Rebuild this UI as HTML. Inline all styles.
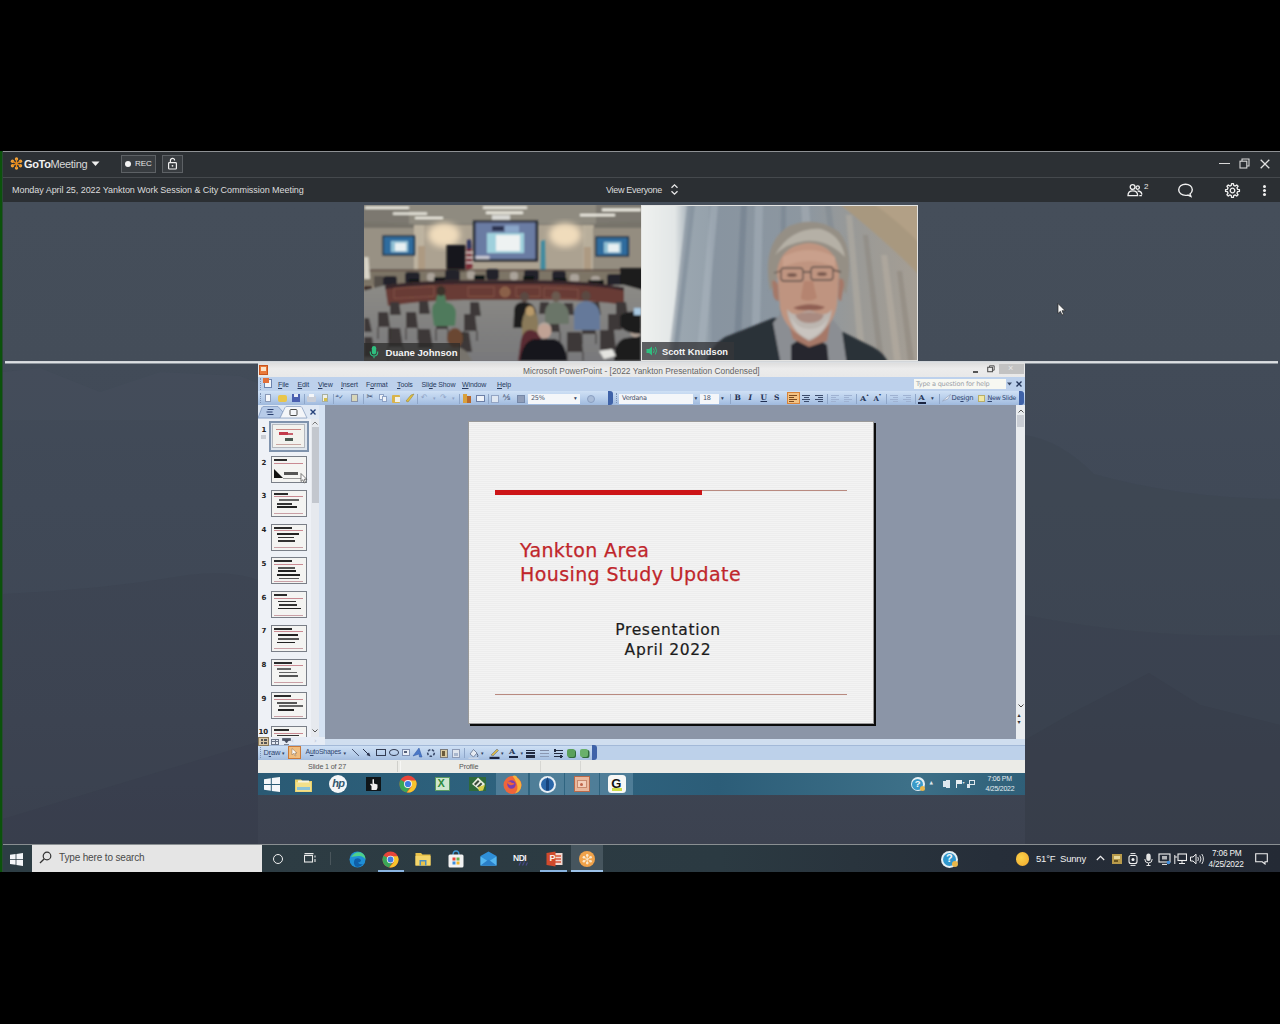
<!DOCTYPE html>
<html lang="en">
<head>
<meta charset="utf-8">
<title>GoToMeeting - Yankton Work Session</title>
<style>
html,body{margin:0;padding:0;background:#000;}
body{width:1280px;height:1024px;position:relative;overflow:hidden;font-family:"Liberation Sans",sans-serif;}
.abs{position:absolute;}
#stage{position:absolute;left:0;top:0;width:1280px;height:1024px;overflow:hidden;background:#000;}
#green{left:0;top:151px;width:3px;height:721px;background:linear-gradient(90deg,#0b520b 0,#0b520b 2px,#2a4a34 2px,#2a4a34 3px);}
#gtm-title{left:3px;top:151px;width:1277px;height:26px;background:#2c3034;border-top:1px solid #8e9194;box-sizing:border-box;}
#gtm-sub{left:3px;top:177px;width:1277px;height:25px;background:#2b2f33;border-top:1px solid #45494d;box-sizing:border-box;}
#main{left:3px;top:202px;width:1277px;height:642px;background:linear-gradient(#454e5a 0,#444d59 159px,#424b58 162px,#404957 300px,#3e4654 520px,#3c4250 642px);overflow:hidden;}
#sep{left:5px;top:361px;width:1273px;height:3px;background:linear-gradient(#c9cdd1 0,#dcdfe2 1px,#dcdfe2 2px,#8e959d 2px,#8e959d 3px);}
.t{position:absolute;white-space:nowrap;line-height:1;}

#gtm-h .w{color:#f2f2f2;}
.btn{position:absolute;box-sizing:border-box;border:1px solid #5d6165;background:#383c40;}

#ppt{left:258px;top:363px;width:767px;height:432px;background:#8b95a7;overflow:hidden;font-family:"DejaVu Sans","Liberation Sans",sans-serif;}
#ppt .t{color:#27395c;}
#p-title{left:0;top:0;width:767px;height:14px;background:linear-gradient(#dedede,#ececec 40%,#e8e8e8);}
#p-menu{left:0;top:14px;width:767px;height:14px;background:#bdd1ec;}
#p-tool{left:0;top:28px;width:767px;height:14px;background:linear-gradient(#cfe0f5,#b4cbe9 60%,#9fb9dd);}
#p-left{left:0;top:42px;width:67px;height:340px;background:#e9eef5;}
#p-edit{left:67px;top:42px;width:691px;height:334px;background:#8b95a7;}
#p-vscroll{left:758px;top:42px;width:9px;height:334px;background:#e9ecef;}
#p-bot{left:67px;top:376px;width:700px;height:6px;background:#d0deef;}
#p-draw{left:0;top:382px;width:767px;height:15px;background:linear-gradient(90deg,transparent 0,transparent 336px,#bdd1ea 336px),linear-gradient(#cddff4,#b6cdea 60%,#a5bee0);border-top:1px solid #a3b9d8;box-sizing:border-box;}
#p-status{left:0;top:397px;width:767px;height:13px;background:#ebebe7;}
#p-task{left:0;top:410px;width:767px;height:22px;background:linear-gradient(90deg,#2a5a74,#2f6480 40%,#2c5d78 60%,#3d7088 85%,#2f5f78);}
.mi{position:absolute;top:17.500px;font-size:7px;line-height:1;white-space:nowrap;color:#27395c;letter-spacing:-0.12px;font-family:"Liberation Sans",sans-serif}
.ic{position:absolute;border-radius:1px;}
/*SECTION-CSS*/
</style>
</head>
<body>
<div id="stage">
<div id="green" class="abs"></div>
<div id="gtm-title" class="abs"></div>
<div id="gtm-sub" class="abs"></div>
<div id="main" class="abs"><svg class="abs" style="left:0;top:159px" width="1277" height="483" viewBox="3 361 1277 483">
<path d="M3 372L40 368L100 392L160 372L240 376L290 396L258 420L3 420z" fill="#48515e" opacity="0.350"/>
<path d="M3 594Q100 590 188 575Q230 570 258 580V844H3z" fill="#363d4a" opacity="0.220"/>
<path d="M3 819L258 742V844H3z" fill="#333946" opacity="0.250"/>
<path d="M1025 435Q1060 440 1094 474Q1180 498 1280 499V844H1025z" fill="#373e4b" opacity="0.220"/>
<path d="M1025 615Q1150 640 1280 635V844H1025z" fill="#353c49" opacity="0.220"/>
<path d="M1025 740L1074 712L1149 673L1200 705L1280 725V844H1025z" fill="#323845" opacity="0.250"/>
</svg></div>
<div id="sep" class="abs"></div>
<div id="gtm-h">
<svg class="abs" style="left:9px;top:156px" width="15" height="15" viewBox="-7.5 -7.5 15 15">
<g fill="#f2a33a"><circle cx="0" cy="-4.6" r="1.7"/><circle cx="0" cy="4.6" r="1.7"/><circle cx="4" cy="-2.3" r="1.7"/><circle cx="4" cy="2.3" r="1.7"/><circle cx="-4" cy="-2.3" r="1.7"/><circle cx="-4" cy="2.3" r="1.7"/></g>
<g stroke="#e88a1a" stroke-width="1.3"><path d="M0 -4.6V4.6M4 -2.3L-4 2.3M-4 -2.3L4 2.3"/></g>
</svg>
<div class="t w" id="gtmlogo" style="left:24px;top:159px;font-size:11px;letter-spacing:-0.35px"><b>GoTo</b><span style="color:#d8d8d8">Meeting</span></div>
<svg class="abs" style="left:91px;top:161px" width="9" height="6"><path d="M0.5 0.5h8l-4 4.5z" fill="#f0f0f0"/></svg>
<div class="btn" style="left:121px;top:155px;width:35px;height:18px"></div>
<div class="abs" style="left:125px;top:161px;width:6px;height:6px;border-radius:50%;background:#f4f4f4"></div>
<div class="t w" style="left:135px;top:160px;font-size:8px;color:#e6e6e6">REC</div>
<div class="btn" style="left:162px;top:155px;width:21px;height:18px"></div>
<svg class="abs" style="left:167px;top:157px" width="11" height="13" viewBox="0 0 11 13"><rect x="1.6" y="5.6" width="7.8" height="6.4" rx="0.8" fill="none" stroke="#f0f0f0" stroke-width="1.2"/><path d="M3.4 5.6V3.4a2.1 2.1 0 0 1 4.2 0" fill="none" stroke="#f0f0f0" stroke-width="1.2"/><circle cx="5.5" cy="8.8" r="0.9" fill="#f0f0f0"/></svg>
<div class="t" id="mtitle" style="left:12px;top:186px;font-size:9px;letter-spacing:-0.05px;color:#dcdcdc">Monday April 25, 2022 Yankton Work Session &amp; City Commission Meeting</div>
<div class="t" id="viewev" style="left:606px;top:186px;letter-spacing:-0.3px;font-size:9px;color:#dcdcdc">View Everyone</div>
<svg class="abs" style="left:670px;top:183px" width="9" height="13" viewBox="0 0 9 13"><path d="M1.5 4.8L4.5 1.8L7.5 4.8M1.5 8.2L4.5 11.2L7.5 8.2" fill="none" stroke="#e8e8e8" stroke-width="1.3"/></svg>
<!-- window controls -->
<div class="abs" style="left:1219px;top:163px;width:11px;height:1px;background:#d8d8d8"></div>
<svg class="abs" style="left:1239px;top:158px" width="11" height="11" viewBox="0 0 11 11"><path d="M3 3V1h7v7H8" fill="none" stroke="#d8d8d8" stroke-width="1.1"/><rect x="1" y="3.2" width="6.8" height="6.8" fill="none" stroke="#d8d8d8" stroke-width="1.1"/></svg>
<svg class="abs" style="left:1260px;top:159px" width="10" height="10" viewBox="0 0 10 10"><path d="M0.7 0.7L9.3 9.3M9.3 0.7L0.7 9.3" stroke="#e0e0e0" stroke-width="1.3"/></svg>
<!-- people -->
<svg class="abs" style="left:1127px;top:183px" width="24" height="15" viewBox="0 0 24 15"><g fill="none" stroke="#f0f0f0" stroke-width="1.3"><circle cx="5.6" cy="4" r="2.4"/><circle cx="10.7" cy="4.6" r="1.7"/><path d="M1 12.6c0-3 2-4.8 4.8-4.8s4.8 1.8 4.8 4.800z"/><path d="M10.600 8c2.300 0 4 1.300 4.300 3.600M12.300 12.600h2.600"/></g></svg>
<div class="t" style="left:1144px;top:183px;font-size:8px;color:#e8e8e8">2</div>
<!-- chat -->
<svg class="abs" style="left:1177px;top:183px" width="17" height="15" viewBox="0 0 17 15"><path d="M8.500 1.200c3.800 0 6.800 2.400 6.800 5.600c0 1.700-0.900 3.200-2.300 4.200l0.900 2.400l-3-1.300c-0.800 0.200-1.600 0.300-2.400 0.300c-3.800 0-6.800-2.400-6.800-5.600s3-5.600 6.800-5.600z" fill="none" stroke="#f0f0f0" stroke-width="1.4"/></svg>
<!-- gear -->
<svg class="abs" style="left:1224px;top:182px" width="17" height="17" viewBox="-8.5 -8.5 17 17"><path d="M-1.21 -5.06L-0.93 -6.94L0.93 -6.94L1.21 -5.06L2.72 -4.43L4.25 -5.56L5.56 -4.25L4.43 -2.72L5.06 -1.21L6.94 -0.93L6.94 0.93L5.06 1.21L4.43 2.72L5.56 4.25L4.25 5.56L2.72 4.43L1.21 5.06L0.93 6.94L-0.93 6.94L-1.21 5.06L-2.72 4.43L-4.25 5.56L-5.56 4.25L-4.43 2.72L-5.06 1.21L-6.94 0.93L-6.94 -0.93L-5.06 -1.21L-4.43 -2.72L-5.56 -4.25L-4.25 -5.56L-2.72 -4.43z" fill="none" stroke="#f0f0f0" stroke-width="1.3" stroke-linejoin="round"/><circle r="2.3" fill="none" stroke="#f0f0f0" stroke-width="1.3"/></svg>
<!-- kebab -->
<div class="abs" style="left:1263px;top:185px;width:3px;height:3px;border-radius:50%;background:#f0f0f0;box-shadow:0 4px 0 #f0f0f0,0 8px 0 #f0f0f0"></div>
</div>
<svg class="abs" id="vid1" style="left:364px;top:205px" width="277" height="156" viewBox="0 -1 277 156">
<defs><filter id="b1" x="-5%" y="-5%" width="110%" height="110%"><feGaussianBlur stdDeviation="0.9"/></filter>
<filter id="b2" x="-20%" y="-20%" width="140%" height="140%"><feGaussianBlur stdDeviation="3"/></filter>
<linearGradient id="floor" x1="0" y1="0" x2="0" y2="1"><stop offset="0" stop-color="#8c8b86"/><stop offset="1" stop-color="#77777a"/></linearGradient>
<clipPath id="c1"><rect y="-1" width="277" height="156"/></clipPath></defs>
<g clip-path="url(#c1)">
<rect y="-1" width="277" height="156" fill="#9a8e7c"/>
<g filter="url(#b1)">
<!-- ceiling -->
<rect x="-5" y="-5" width="290" height="23" fill="#8f8b80"/><rect x="-5" y="-5" width="50" height="30" fill="#7b786f"/><rect x="232" y="-5" width="50" height="30" fill="#7b786f"/>
<path d="M-5 16L50 18L225 18L285 15V24L225 22H50L-5 24z" fill="#77736a"/>
<!-- lights -->
<g fill="#f4f2e8"><rect x="1" y="0.500" width="44" height="2.400"/><rect x="29" y="6.500" width="34" height="2.200"/><rect x="51" y="11" width="28" height="2"/><rect x="119" y="0.500" width="44" height="2.200"/><rect x="122" y="5.500" width="37" height="2.400"/><rect x="216" y="8" width="35" height="2.200"/><rect x="238" y="2.500" width="39" height="2.600"/></g>
<rect x="128" y="9" width="18" height="6.500" fill="#d8d8d4"/>
<!-- walls -->
<rect x="-5" y="22" width="58" height="48" fill="#989184"/>
<rect x="50" y="19" width="180" height="50" fill="#aca291"/>
<rect x="225" y="22" width="60" height="48" fill="#948d80"/>
<rect x="50" y="19" width="10" height="50" fill="#bdb3a0"/><rect x="219" y="19" width="10" height="50" fill="#b8ae9b"/>
<rect x="54" y="40" width="7" height="27" fill="#ad9a82"/><rect x="220" y="41" width="7" height="26" fill="#ad9a82"/>
</g>
<ellipse cx="80" cy="29" rx="16" ry="12" fill="#f0dcbc" filter="url(#b2)"/>
<ellipse cx="201" cy="29" rx="16" ry="12" fill="#f0dcbc" filter="url(#b2)"/>
<g filter="url(#b1)">
<!-- projector screen -->
<rect x="109" y="14.500" width="65" height="41" fill="#23252e"/>
<rect x="111.500" y="16.500" width="60" height="36.500" fill="#6a7ba3"/>
<rect x="123" y="27" width="37" height="20" fill="#9fd0dc"/><rect x="132" y="29" width="24" height="16" fill="#eef2f2"/>
<rect x="128" y="20" width="12" height="5" fill="#2b3350"/><rect x="141" y="19.500" width="14" height="7" fill="#8aa6c8"/>
<rect x="111.500" y="50" width="14" height="3" fill="#c9c9d4"/>
<!-- tvs -->
<rect x="18.500" y="29.500" width="32.500" height="20" fill="#1e2a3e"/><rect x="20" y="31" width="29.500" height="17" fill="#2f6c9e"/><rect x="27" y="35" width="17" height="11" fill="#8fc0d4"/><rect x="31" y="37" width="11" height="8" fill="#e8f0f2"/>
<rect x="231.500" y="30.500" width="33.500" height="20" fill="#1e2a3e"/><rect x="233" y="32" width="30.500" height="17" fill="#2f6c9e"/><rect x="240" y="36" width="17" height="11" fill="#8fc0d4"/><rect x="244" y="38" width="11" height="8" fill="#e8f0f2"/>
<!-- door -->
<rect x="82.500" y="39" width="19" height="34" fill="#17171b"/>
<!-- flags -->
<path d="M103 34L107 33.500L108.500 62L102 64z" fill="#7a2a36"/><path d="M103 34l4-0.500l0.500 9l-4.500 1z" fill="#2a3560"/><rect x="102.500" y="46" width="6" height="1.300" fill="#e4d8d8"/><rect x="102.500" y="51" width="6" height="1.300" fill="#e4d8d8"/><rect x="102.500" y="56" width="6" height="1.300" fill="#e4d8d8"/>
<path d="M177 35L181 34L181.500 64L176.500 65z" fill="#3f8aa0"/>
<!-- rail behind dais -->
<rect x="-5" y="63.500" width="290" height="2" fill="#5a4a40"/>
<rect x="-5" y="65.500" width="290" height="14" fill="#7d7466"/>
<!-- left easel / white -->
<path d="M0 51h4.500l1.500 22H0z" fill="#d8d4c8"/>
<rect x="0" y="80" width="8" height="32" fill="#3a2a28"/>
<!-- council people row -->
<g fill="#24242a"><rect x="19" y="70" width="14" height="11" rx="3"/><rect x="41" y="66" width="15" height="12" rx="3"/><rect x="81" y="64" width="15" height="12" rx="3"/><rect x="122" y="63" width="13" height="11" rx="3"/><rect x="160" y="64" width="15" height="11" rx="3"/><rect x="188" y="65" width="14" height="12" rx="3"/><rect x="243" y="68" width="16" height="13" rx="3"/></g>
<g fill="#aaa39a"><rect x="63" y="67" width="8" height="8" rx="3"/><rect x="103" y="65" width="8" height="8" rx="3"/><rect x="146" y="66" width="8" height="8" rx="3"/><rect x="206" y="68" width="9" height="8" rx="3"/><rect x="227" y="70" width="9" height="7" rx="3"/></g>
<g fill="#111318"><rect x="70" y="71" width="11" height="5"/><rect x="110" y="69" width="11" height="5"/><rect x="159" y="70" width="11" height="5"/><rect x="190" y="72" width="13" height="5"/><rect x="224" y="74" width="16" height="5"/><rect x="45" y="73" width="10" height="4"/></g>
<!-- right dark area -->
<rect x="256" y="62" width="24" height="28" fill="#1e1c1e"/>
<rect x="10" y="70" width="9" height="14" fill="#55504a"/>
<!-- floor -->
<path d="M-5 86L22 79H260L285 86V160H-5z" fill="url(#floor)"/>
<!-- dais -->
<path d="M21 79.500Q60 74 100 74.500H180Q225 74.500 260 81.500V99Q225 93.500 180 94H100Q60 94 24 100z" fill="#673a35"/>
<path d="M21 79.500Q60 74 100 74.500H180Q225 74.500 260 81.500V84.500Q225 78 180 78H100Q60 78 21 83z" fill="#35262a"/>
<g fill="none" stroke="#8c5a4a" stroke-width="0.800"><rect x="30" y="84" width="40" height="10" transform="skewY(-3)"/><rect x="104" y="81" width="26" height="9.500"/><rect x="152" y="81" width="24" height="9.500"/><rect x="180" y="82" width="34" height="10" transform="skewY(2.500) translate(0,-8)"/></g>
<circle cx="141" cy="86" r="5" fill="#8a6048" stroke="#a67a5a" stroke-width="0.600"/>
<!-- chairs left -->
<g fill="#3d3937">
<path d="M26 96h9l2 13h-11z"/><path d="M55 95h9l2 13h-11z"/><path d="M106 96h9l2 14h-11z"/><path d="M14 106h10l2 15h-12z"/><path d="M42 106h10l2 16h-12z"/><path d="M72 107h10l2 16h-12z"/><path d="M100 108h11l2 17h-13z"/><path d="M24 122h12l3 19h-15z"/><path d="M54 123h12l3 19h-15z"/><path d="M94 126h11l3 20h-14z"/><path d="M0 112h5l3 14h-8z"/><path d="M0 131h8l3 20h-11z"/>
<path d="M150 108h9l1 14h-11z"/><path d="M176 96h9l1 12h-11z"/><path d="M200 97h9l1 12h-11z"/><path d="M226 96h9l2 13h-11z"/><path d="M252 96h10l2 14h-12z"/><path d="M182 110h12l2 16h-14z"/><path d="M218 111h12l2 17h-14z"/><path d="M244 108h12l2 16h-14z"/><path d="M203 126h14l2 20h-16z"/><path d="M236 124h14l2 20h-16z"/>
</g>
<g stroke="#34312f" stroke-width="1" fill="none"><path d="M14 121v12M26 121v12M42 122v12M54 122v12M72 123v12M84 123v12M100 125v10M113 125v10M24 141v14M39 141v14M182 126v10M196 126v10M218 128v10M232 128v10M203 146v9M219 146v9"/></g>
<!-- audience -->
<path d="M72 96Q72 87 77 87Q82 87 82 96Q92 98 92 108L91 120H70L68 106Q68 98 72 96z" fill="#4f7a5c"/><ellipse cx="77" cy="85" rx="4.500" ry="5" fill="#3a332c"/>
<path d="M150 105Q150 96 160 96Q170 96 172 106L174 122H150z" fill="#1d1b1c"/><ellipse cx="160.500" cy="91" rx="4.500" ry="5" fill="#5a4a42"/>
<path d="M181 106Q182 96 192 96Q203 96 205 108L205 118H181z" fill="#6b7468"/><ellipse cx="192" cy="90.500" rx="4.500" ry="5.200" fill="#6a5a50"/>
<path d="M210 108Q211 96 222 95Q234 96 236 108L236 124H210z" fill="#65799a"/><ellipse cx="222" cy="90" rx="4.500" ry="5" fill="#5a4a42"/>
<path d="M158 116Q160 104 166 103Q173 104 174 116L176 140H158z" fill="#8a7a5a"/><ellipse cx="166" cy="105" rx="4.500" ry="5" fill="#b89a6a"/>
<path d="M157 134Q160 122 168 124Q178 126 178 140L176 155H154z" fill="#5a2a32"/>
<path d="M156 155Q158 136 170 133L190 133Q202 136 203 155z" fill="#16161a"/><ellipse cx="180.500" cy="124.500" rx="7" ry="8" fill="#c0a294"/><path d="M174 121Q180 115 187 121Q186 117 180.500 116.500Q175 117 174 121z" fill="#b0a8a0"/>
<path d="M76 155Q78 142 88 140Q100 141 104 148L108 155z" fill="#77736c"/><ellipse cx="91" cy="132" rx="8" ry="10" fill="#6a4632"/>
<path d="M250 155Q250 134 262 132L277 130V155z" fill="#1b1a1c"/><ellipse cx="271.500" cy="124" rx="6" ry="7" fill="#b6a69a"/>
<path d="M256 110Q262 104 277 106V128Q262 128 256 120z" fill="#1b1a1c"/>
<rect x="270" y="102" width="7" height="7" fill="#a8c8e0"/>
<path d="M235 145L248 143L252 150L240 153z" fill="#e4e4e0"/>
</g>
<!-- label -->
<rect x="0" y="137" width="96" height="18" fill="#2a2a28" opacity="0.720"/>
<g transform="translate(10,146)"><rect x="-2.200" y="-6" width="4.400" height="8.500" rx="2.200" fill="#2fbf7f"/><path d="M-3.800 -0.500Q-3.800 4 0 4Q3.800 4 3.800 -0.500M0 4V6.300" fill="none" stroke="#2fbf7f" stroke-width="1.100"/></g>
<text x="21.500" y="149.800" font-family="Liberation Sans, sans-serif" font-size="9.800" font-weight="bold" fill="#f4f4f4" textLength="72" lengthAdjust="spacingAndGlyphs">Duane Johnson</text>
</g></svg>
<svg class="abs" id="vid2" style="left:641px;top:205px" width="277" height="156" viewBox="0 0 277 156">
<defs><filter id="b3" x="-5%" y="-5%" width="110%" height="110%"><feGaussianBlur stdDeviation="1.300"/></filter>
<filter id="b4" x="-20%" y="-20%" width="140%" height="140%"><feGaussianBlur stdDeviation="4"/></filter>
<linearGradient id="curt" x1="0" y1="0" x2="1" y2="0"><stop offset="0" stop-color="#a2adb6"/><stop offset="0.240" stop-color="#96a2ac"/><stop offset="0.260" stop-color="#8894a0"/><stop offset="0.600" stop-color="#8d97a0"/><stop offset="0.800" stop-color="#9b9a96"/><stop offset="1" stop-color="#a59e94"/></linearGradient>
<linearGradient id="win" x1="0" y1="0" x2="1" y2="0"><stop offset="0" stop-color="#f0f2f0"/><stop offset="0.700" stop-color="#e2e6e6"/><stop offset="1" stop-color="#9aa6b0"/></linearGradient>
<clipPath id="c2"><rect x="1" y="1" width="275" height="154"/></clipPath></defs>
<rect width="277" height="156" fill="#e4e4e2"/>
<g clip-path="url(#c2)">
<rect x="0" y="0" width="277" height="156" fill="url(#curt)"/>
<g filter="url(#b3)">
<path d="M-3 -3H50L30 160H-3z" fill="url(#win)"/>
<!-- curtain folds -->
<g opacity="0.550"><path d="M70 0h7l-14 156h-8z" fill="#a9b4bd"/><path d="M100 0h6l-7 156h-7z" fill="#6f7c8a"/><path d="M114 0h8l-4 156h-8z" fill="#a6b1ba"/><path d="M140 0h5l0 156h-6z" fill="#76828e"/><path d="M160 0h8l4 60h-8z" fill="#a8b0b6"/><path d="M184 0h6l10 80h-7z" fill="#7f8890"/><path d="M205 10h6l14 146h-7z" fill="#b4aea2"/><path d="M222 30h5l16 126h-6z" fill="#8a867e"/><path d="M240 50h6l14 106h-7z" fill="#b8b0a2"/><path d="M256 66h5l12 90h-6z" fill="#8c867c"/><path d="M46 0h8l-18 156h-9z" fill="#7b8896"/></g>
<!-- ceiling upper-right -->
<path d="M196 -3H280V72Q250 40 196 -3z" fill="#a8987f"/>
<path d="M230 -3H280V40Q260 18 230 -3z" fill="#b2a086"/>
</g>
<g filter="url(#b3)">
<!-- sweater -->
<path d="M64 160Q70 140 84 132L132 113L152 112L200 126L232 142Q244 148 248 160z" fill="#2b3037"/>
<!-- collar -->
<path d="M132 118L140 108L162 126L190 112L201 126L206 160H140z" fill="#8b8e93"/>
<path d="M150 140L168 128L186 140L188 160H150z" fill="#25282d"/>
<!-- neck -->
<path d="M146 112L190 112L186 136L168 142L152 134z" fill="#a67868"/>
<!-- hair -->
<path d="M129 86Q120 38 148 21Q176 10 198 27Q214 44 205 90L196 70Q170 50 140 66z" fill="#958f85"/>
<path d="M134 50Q150 22 180 24Q200 30 204 52Q186 34 164 36Q146 38 134 50z" fill="#b5b0a6"/>
<!-- face -->
<path d="M136 66Q140 40 168 38Q196 40 198 70L196 100Q192 124 168 134Q146 128 139 104z" fill="#bf9480"/>
<path d="M142 62Q168 50 194 62L194 52Q168 38 142 52z" fill="#c9a08c"/>
<!-- ears / side -->
<path d="M131 76q4-2 6 4l1 16q-5 0-6-8z" fill="#a67868"/><path d="M198 74q5-2 5 6l-3 16q-3 0-3-6z" fill="#a67868"/>
<!-- glasses -->
<g fill="none" stroke="#5a4e48" stroke-width="1.300"><rect x="140" y="63" width="22" height="13" rx="3"/><rect x="170" y="62" width="22" height="13" rx="3"/><path d="M162 67h8M140 66l-7 2M192 65l8 2"/></g>
<ellipse cx="151" cy="70" rx="5" ry="2" fill="#7a5a50"/><ellipse cx="181" cy="69" rx="5" ry="2" fill="#7a5a50"/>
<!-- nose / mouth -->
<path d="M163 76Q160 90 160 94Q168 98 176 93Q174 86 172 76z" fill="#b5846f"/>
<path d="M152 103Q168 96 184 102Q180 106 168 105Q158 106 152 103z" fill="#8f5f52"/>
<!-- beard -->
<path d="M146 104Q148 126 168 136Q188 128 191 104Q186 112 176 108Q168 104 160 108Q152 112 146 104z" fill="#bcb6b0"/>
<path d="M154 110Q168 104 183 110Q180 118 168 118Q158 118 154 110z" fill="#a98a80"/>
<path d="M150 112Q152 128 168 134Q184 128 187 112Q182 124 168 124Q156 124 150 112z" fill="#c9c4bf"/>
</g>
<!-- label -->
<rect x="1" y="137" width="92" height="18" fill="#34363a" opacity="0.780"/>
<g transform="translate(5,141)"><path d="M0.500 3h2.500l3-2.500v9l-3-2.500h-2.500z" fill="#2fbf7f"/><path d="M7.500 2.500q1.500 2 0 4.500M9.300 1q2.500 3.500 0 7.500" fill="none" stroke="#2fbf7f" stroke-width="1"/></g>
<text x="21" y="150" font-family="Liberation Sans, sans-serif" font-size="9.800" font-weight="bold" fill="#f4f4f4" textLength="66" lengthAdjust="spacingAndGlyphs">Scott Knudson</text>
</g></svg>

<div id="ppt" class="abs">
<div id="p-title" class="abs"></div>
<div id="p-menu" class="abs"></div>
<div id="p-tool" class="abs"></div>
<div id="p-left" class="abs"></div>
<div id="p-edit" class="abs"></div>
<div id="p-vscroll" class="abs"></div>
<div id="p-bot" class="abs"></div>
<div id="p-draw" class="abs"></div>
<div id="p-status" class="abs"></div>
<div id="p-task" class="abs"></div>
<div class="abs" style="left:1px;top:2px;width:9px;height:10px;background:#e9793a;border:1px solid #c8541c;box-sizing:border-box"></div>
<div class="abs" style="left:3px;top:4px;width:5px;height:4px;background:#fbe3c8"></div>
<div class="t" id="ptitle" style="left:265px;top:3.500px;font-size:8.400px;color:#646464;font-family:'Liberation Sans',sans-serif;letter-spacing:0">Microsoft PowerPoint - [2022 Yankton Presentation Condensed]</div>
<div class="abs" style="left:715px;top:8px;width:5px;height:2px;background:#555"></div>
<svg class="abs" style="left:729px;top:2px" width="8" height="8" viewBox="0 0 8 8"><path d="M2.500 2V0.800h4.700v4.400H6" fill="none" stroke="#555" stroke-width="1"/><rect x="0.700" y="2.300" width="4.800" height="4.400" fill="none" stroke="#555" stroke-width="1.100"/></svg>
<div class="abs" style="left:741px;top:1px;width:25px;height:10px;background:#c2c2c2"></div>
<div class="t" style="left:750px;top:1px;font-size:9px;color:#e8e8e8;font-family:'Liberation Sans',sans-serif">×</div>

<div class="abs" style="left:2px;top:15px;width:1px;height:12px;border-left:1px dotted #7d93b5"></div>
<div class="abs" style="left:6px;top:16px;width:8px;height:9px;background:#f2f5fa;border:1px solid #6c83ad;box-sizing:border-box"></div>
<div class="abs" style="left:5px;top:15px;width:6px;height:5px;background:#e2703a"></div>
<div class="mi" style="left:20px"><u>F</u>ile</div>
<div class="mi" style="left:39.5px"><u>E</u>dit</div>
<div class="mi" style="left:60px"><u>V</u>iew</div>
<div class="mi" style="left:83px"><u>I</u>nsert</div>
<div class="mi" style="left:108px">F<u>o</u>rmat</div>
<div class="mi" style="left:139px"><u>T</u>ools</div>
<div class="mi" style="left:163.5px">Sli<u>d</u>e Show</div>
<div class="mi" style="left:204px"><u>W</u>indow</div>
<div class="mi" style="left:239px"><u>H</u>elp</div>
<div class="abs" style="left:656px;top:16px;width:92px;height:10px;background:#f7f8f2"></div>
<div class="t" style="left:658px;top:18px;font-size:6.500px;color:#9a9fa8;letter-spacing:-0.2px">Type a question for help</div>
<svg class="abs" style="left:749px;top:19px" width="5" height="4"><path d="M0 0.500h5l-2.500 3z" fill="#3a4a66"/></svg>
<svg class="abs" style="left:758px;top:18px" width="6" height="6" viewBox="0 0 6 6"><path d="M0.500 0.500L5.500 5.500M5.500 0.500L0.500 5.500" stroke="#24365a" stroke-width="1.400"/></svg>

<div class="abs" style="left:2px;top:30px;width:1px;height:10px;background:transparent;border-left:1px dotted #7d93b5"></div>
<div class="abs" style="left:6.5px;top:31px;width:6px;height:8px;background:#f6f8fb;border:1px solid #8a9ab8;box-sizing:border-box"></div>
<div class="abs" style="left:20px;top:32px;width:9px;height:7px;background:#e9c64c;border-radius:2px"></div>
<div class="abs" style="left:33.5px;top:31px;width:8px;height:8px;background:#4a5fb0;"></div>
<div class="abs" style="left:35.5px;top:31px;width:4px;height:3px;background:#e8ecf6;"></div>
<div class="abs" style="left:45.5px;top:30.5px;width:1px;height:10px;background:#8fa6c8;"></div>
<div class="abs" style="left:48.5px;top:33px;width:9px;height:6px;background:#c9ced8;border-radius:1px"></div>
<div class="abs" style="left:50.5px;top:31px;width:5px;height:3px;background:#f4f6f9;"></div>
<div class="abs" style="left:64px;top:31px;width:6px;height:8px;background:#eef0e8;border:1px solid #a8b0a0;box-sizing:border-box"></div>
<div class="abs" style="left:66px;top:35px;width:3px;height:3px;background:#d8c04a;"></div>
<div class="abs" style="left:74.5px;top:30.5px;width:1px;height:10px;background:#8fa6c8;"></div>
<div class="t" style="left:77.5px;top:30.5px;font-size:6px;letter-spacing:-1px"><span style="color:#35507a">ᵃᵇ✓</span></div>
<div class="abs" style="left:92.5px;top:31px;width:7px;height:8px;background:#d8d6b8;border:1px solid #8a93a6;box-sizing:border-box"></div>
<div class="abs" style="left:104.5px;top:30.5px;width:1px;height:10px;background:#8fa6c8;"></div>
<div class="t" style="left:108.5px;top:30px;font-size:8px;"><span style="color:#3a4866">✂</span></div>
<div class="abs" style="left:121px;top:31px;width:5px;height:6px;background:#eef2f8;border:1px solid #8ea2c4;box-sizing:border-box"></div>
<div class="abs" style="left:124px;top:33px;width:5px;height:6px;background:#eef2f8;border:1px solid #8ea2c4;box-sizing:border-box"></div>
<div class="abs" style="left:133.5px;top:31.5px;width:8px;height:8px;background:#d9b44c;border-radius:1px"></div>
<div class="abs" style="left:136.5px;top:34px;width:5px;height:5px;background:#f2f2ea;"></div>
<svg class="abs" style="left:147px;top:30px" width="10" height="10"><path d="M1 8L6 2L9 1L7 4L3 9z" fill="#e2c040" stroke="#8a7a30" stroke-width="0.500"/></svg>
<div class="abs" style="left:159px;top:30.5px;width:1px;height:10px;background:#8fa6c8;"></div>
<div class="t" style="left:163px;top:30.5px;font-size:8px;"><span style="color:#8fa3c6">↶</span></div>
<div class="t" style="left:175px;top:33px;font-size:5px;"><span style="color:#8fa3c6">▾</span></div>
<div class="t" style="left:182px;top:30.5px;font-size:8px;"><span style="color:#8fa3c6">↷</span></div>
<div class="t" style="left:194px;top:33px;font-size:5px;"><span style="color:#8fa3c6">▾</span></div>
<div class="abs" style="left:200.5px;top:30.5px;width:1px;height:10px;background:#8fa6c8;"></div>
<div class="abs" style="left:204.5px;top:31px;width:4px;height:9px;background:#d9a13c;"></div>
<div class="abs" style="left:208.5px;top:33px;width:4px;height:7px;background:#b8682c;"></div>
<div class="abs" style="left:217.5px;top:32px;width:9px;height:7px;background:#eef2f8;border:1px solid #6c7fa6;box-sizing:border-box"></div>
<div class="abs" style="left:230px;top:30.5px;width:1px;height:10px;background:#8fa6c8;"></div>
<div class="abs" style="left:233px;top:31.5px;width:8px;height:8px;background:#dfe7f2;border:1px solid #93a5c4;box-sizing:border-box"></div>
<div class="t" style="left:244.5px;top:30.5px;font-size:8px;"><span style="color:#3a4866">⅍</span></div>
<div class="abs" style="left:258.5px;top:31.5px;width:8px;height:8px;background:#8f9db8;border:1px solid #7688a8;box-sizing:border-box"></div>
<div class="abs" style="left:270px;top:30.5px;width:52px;height:10px;background:#f4f6f9;"></div>
<div class="t" style="left:273px;top:32px;font-size:6.5px;letter-spacing:-0.3px"><span style="color:#46506a">25%</span></div>
<div class="t" style="left:316px;top:33px;font-size:5.5px;"><span style="color:#2f4060">▾</span></div>
<div class="abs" style="left:329px;top:31.5px;width:8px;height:8px;background:#a9bcd8;border-radius:50%;border:1px solid #8a9fc2;box-sizing:border-box"></div>
<div class="abs" style="left:350px;top:28px;width:5px;height:14px;background:#3f62a8;border-radius:0 3px 3px 0"></div>
<div class="abs" style="left:358px;top:30px;width:1px;height:10px;background:transparent;border-left:1px dotted #7d93b5"></div>
<div class="abs" style="left:361px;top:30.5px;width:74px;height:10px;background:#f4f6f9;"></div>
<div class="t" style="left:364px;top:32px;font-size:6.5px;letter-spacing:-0.3px"><span style="color:#46506a">Verdana</span></div>
<div class="t" style="left:436.5px;top:33px;font-size:5.5px;"><span style="color:#2f4060">▾</span></div>
<div class="abs" style="left:442px;top:30.5px;width:19px;height:10px;background:#f4f6f9;"></div>
<div class="t" style="left:445px;top:32px;font-size:6.5px;letter-spacing:-0.3px"><span style="color:#46506a">18</span></div>
<div class="t" style="left:463px;top:33px;font-size:5.5px;"><span style="color:#2f4060">▾</span></div>
<div class="abs" style="left:471.5px;top:30.5px;width:1px;height:10px;background:#8fa6c8;"></div>
<div class="t" style="left:476.5px;top:31px;font-size:7.5px;font-family:'DejaVu Serif',serif"><span style="color:#1f2f52"><b>B</b></span></div>
<div class="t" style="left:490.5px;top:31px;font-size:7.5px;font-family:'DejaVu Serif',serif"><span style="color:#1f2f52"><i><b>I</b></i></span></div>
<div class="t" style="left:502.5px;top:31px;font-size:7.5px;font-family:'DejaVu Serif',serif"><span style="color:#1f2f52"><b><u>U</u></b></span></div>
<div class="t" style="left:516px;top:31px;font-size:7.5px;font-family:'DejaVu Serif',serif"><span style="color:#1f2f52"><b>S</b></span></div>
<div class="abs" style="left:528.5px;top:29px;width:13px;height:12px;background:#f3c283;border:1px solid #d8843a;box-sizing:border-box"></div>
<div class="abs" style="left:531px;top:31.5px;width:8px;height:1px;background:#7a4a20;"></div>
<div class="abs" style="left:531px;top:33.5px;width:5px;height:1px;background:#7a4a20;"></div>
<div class="abs" style="left:531px;top:35.5px;width:8px;height:1px;background:#7a4a20;"></div>
<div class="abs" style="left:531px;top:37.5px;width:5px;height:1px;background:#7a4a20;"></div>
<div class="abs" style="left:544.0px;top:31.5px;width:8px;height:1px;background:#3c4c6c;"></div>
<div class="abs" style="left:545.5px;top:33.5px;width:5px;height:1px;background:#3c4c6c;"></div>
<div class="abs" style="left:544.0px;top:35.5px;width:8px;height:1px;background:#3c4c6c;"></div>
<div class="abs" style="left:545.5px;top:37.5px;width:5px;height:1px;background:#3c4c6c;"></div>
<div class="abs" style="left:557px;top:31.5px;width:8px;height:1px;background:#3c4c6c;"></div>
<div class="abs" style="left:560px;top:33.5px;width:5px;height:1px;background:#3c4c6c;"></div>
<div class="abs" style="left:557px;top:35.5px;width:8px;height:1px;background:#3c4c6c;"></div>
<div class="abs" style="left:560px;top:37.5px;width:5px;height:1px;background:#3c4c6c;"></div>
<div class="abs" style="left:568.5px;top:30.5px;width:1px;height:10px;background:#8fa6c8;"></div>
<div class="abs" style="left:573px;top:31.5px;width:8px;height:1px;background:#9fb2d2;"></div>
<div class="abs" style="left:573px;top:33.5px;width:5px;height:1px;background:#9fb2d2;"></div>
<div class="abs" style="left:573px;top:35.5px;width:8px;height:1px;background:#9fb2d2;"></div>
<div class="abs" style="left:573px;top:37.5px;width:5px;height:1px;background:#9fb2d2;"></div>
<div class="abs" style="left:586px;top:31.5px;width:8px;height:1px;background:#9fb2d2;"></div>
<div class="abs" style="left:586px;top:33.5px;width:5px;height:1px;background:#9fb2d2;"></div>
<div class="abs" style="left:586px;top:35.5px;width:8px;height:1px;background:#9fb2d2;"></div>
<div class="abs" style="left:586px;top:37.5px;width:5px;height:1px;background:#9fb2d2;"></div>
<div class="abs" style="left:597.5px;top:30.5px;width:1px;height:10px;background:#8fa6c8;"></div>
<div class="t" style="left:602px;top:30.5px;font-size:8px;font-family:'DejaVu Serif',serif"><span style="color:#2a3a5c"><b>A</b></span></div>
<div class="t" style="left:608.5px;top:29.5px;font-size:4px;"><span style="color:#2a3a5c">▴</span></div>
<div class="t" style="left:615.5px;top:31.5px;font-size:7px;font-family:'DejaVu Serif',serif"><span style="color:#2a3a5c"><b>A</b></span></div>
<div class="t" style="left:621px;top:29.5px;font-size:4px;"><span style="color:#2a3a5c">▾</span></div>
<div class="abs" style="left:627.5px;top:30.5px;width:1px;height:10px;background:#8fa6c8;"></div>
<div class="abs" style="left:632px;top:31.5px;width:8px;height:1px;background:#9fb2d2;"></div>
<div class="abs" style="left:635px;top:33.5px;width:5px;height:1px;background:#9fb2d2;"></div>
<div class="abs" style="left:632px;top:35.5px;width:8px;height:1px;background:#9fb2d2;"></div>
<div class="abs" style="left:635px;top:37.5px;width:5px;height:1px;background:#9fb2d2;"></div>
<div class="abs" style="left:645px;top:31.5px;width:8px;height:1px;background:#9fb2d2;"></div>
<div class="abs" style="left:648px;top:33.5px;width:5px;height:1px;background:#9fb2d2;"></div>
<div class="abs" style="left:645px;top:35.5px;width:8px;height:1px;background:#9fb2d2;"></div>
<div class="abs" style="left:648px;top:37.5px;width:5px;height:1px;background:#9fb2d2;"></div>
<div class="abs" style="left:656.5px;top:30.5px;width:1px;height:10px;background:#8fa6c8;"></div>
<div class="t" style="left:660.5px;top:30px;font-size:8px;font-family:'DejaVu Serif',serif"><span style="color:#2a3a5c"><b>A</b></span></div>
<div class="abs" style="left:660px;top:38.5px;width:8px;height:2px;background:#1a2440;"></div>
<div class="t" style="left:673px;top:33px;font-size:5.5px;"><span style="color:#2f4060">▾</span></div>
<div class="abs" style="left:680.5px;top:30.5px;width:1px;height:10px;background:#8fa6c8;"></div>
<svg class="abs" style="left:683.5px;top:31px" width="9" height="8"><path d="M0.500 7L5 3L8.500 0.500L6 5z" fill="#e9edf4" stroke="#8c9bb6" stroke-width="0.600"/></svg>
<div class="t" style="left:693.5px;top:31.5px;font-size:6.8px;letter-spacing:-0.3px"><span style="color:#2f4570">De<u>s</u>ign</span></div>
<div class="abs" style="left:720px;top:31.5px;width:7px;height:7px;background:#f1e7a4;border:1px solid #b8ae6a;box-sizing:border-box"></div>
<div class="t" style="left:729.5px;top:31.5px;font-size:6.4px;letter-spacing:-0.35px"><span style="color:#2f4570"><u>N</u>ew Slide</span></div>
<div class="abs" style="left:761px;top:28px;width:5px;height:14px;background:#3f62a8;border-radius:0 3px 3px 0"></div>

<div class="abs" style="left:0px;top:42px;width:67px;height:14px;background:#dfe8f4;"></div>
<svg class="abs" style="left:0;top:42px" width="67" height="14" viewBox="0 0 67 14"><path d="M0 13L4 2.500Q4.500 1.500 6 1.500H20L25 7L22 13z" fill="#b7cbe8" stroke="#7f98c0" stroke-width="0.800"/><path d="M22 13L27 2.500Q27.500 1.500 29 1.500H42Q43.500 1.500 44 2.500L49 13z" fill="#f4f6f9" stroke="#8ea2c2" stroke-width="0.800"/><path d="M9.500 4.500h6M8.500 7h6M9.500 9.500h6" stroke="#2a3f6e" stroke-width="1.100"/><rect x="32" y="4.500" width="7" height="6" rx="1" fill="none" stroke="#4a4a4a" stroke-width="1"/><path d="M52.500 4.500L57.500 9.500M57.500 4.500L52.500 9.500" stroke="#24407a" stroke-width="1.400"/></svg>
<div class="abs" style="left:0px;top:56px;width:53px;height:318px;background:#eef1f6;"></div>
<div class="abs" style="left:53px;top:56px;width:8px;height:318px;background:#e6e9ee;"></div>
<div class="abs" style="left:61px;top:42px;width:6px;height:334px;background:#d5e2f2;"></div>
<div class="abs" style="left:53.5px;top:64px;width:7px;height:76px;background:#c3c7ce;"></div>
<svg class="abs" style="left:54px;top:58px" width="6" height="4"><path d="M0.500 3.500L3 1L5.500 3.500" fill="none" stroke="#777" stroke-width="1"/></svg>
<svg class="abs" style="left:54px;top:366px" width="6" height="4"><path d="M0.500 0.500L3 3L5.500 0.500" fill="none" stroke="#555" stroke-width="1"/></svg>
<div class="abs" style="left:10.5px;top:57.5px;width:40px;height:31px;background:#dfe6ee;border:2px solid #7f93ad;box-sizing:border-box"></div>
<div class="abs" style="left:14px;top:61px;width:33px;height:24px;background:#f2f2ee;border:1px solid #b4b8be;box-sizing:border-box"></div>
<div class="abs" style="left:18px;top:65.5px;width:25px;height:1px;background:#c98a86;"></div>
<div class="abs" style="left:18px;top:80.5px;width:25px;height:1px;background:#c9a6a2;"></div>
<div class="abs" style="left:21px;top:69px;width:9px;height:3px;background:#c23a4a;"></div>
<div class="abs" style="left:30px;top:70px;width:5px;height:2px;background:#c8626e;"></div>
<div class="abs" style="left:27px;top:75px;width:8px;height:3px;background:#4a5a52;"></div>
<div class="t" style="left:3.5px;top:63.5px;font-size:7px;"><span style="color:#222"><b>1</b></span></div>
<div class="abs" style="left:3px;top:72px;width:5px;height:4px;background:#c9cdd4;"></div>
<div class="abs" style="left:13px;top:93.0px;width:35.5px;height:27px;background:#f4f4f2;border:1px solid #7a7f88;box-sizing:border-box"></div>
<div class="t" style="left:3.5px;top:96.5px;font-size:7px;"><span style="color:#222"><b>2</b></span></div>
<div class="abs" style="left:16px;top:96.0px;width:13px;height:2px;background:#2a2a2a;"></div>
<div class="abs" style="left:16px;top:99.5px;width:29px;height:1px;background:#c98a92;"></div>
<svg class="abs" style="left:16px;top:106.0px" width="10" height="9"><path d="M0 0V9H9z" fill="#111"/></svg>
<div class="abs" style="left:26px;top:109.0px;width:14px;height:3px;background:#555;"></div>
<div class="abs" style="left:25px;top:115.0px;width:20px;height:1px;background:#999;"></div>
<div class="abs" style="left:13px;top:126.8px;width:35.5px;height:27px;background:#f4f4f2;border:1px solid #7a7f88;box-sizing:border-box"></div>
<div class="t" style="left:3.5px;top:130.2px;font-size:7px;"><span style="color:#222"><b>3</b></span></div>
<div class="abs" style="left:16px;top:129.8px;width:14px;height:2px;background:#2a2a2a;"></div>
<div class="abs" style="left:16px;top:133.2px;width:29px;height:1px;background:#c98a92;"></div>
<div class="abs" style="left:21px;top:136.2px;width:20px;height:1.8px;background:#666;"></div>
<div class="abs" style="left:19px;top:139.9px;width:15px;height:1.8px;background:#333;"></div>
<div class="abs" style="left:19px;top:143.4px;width:20px;height:1.8px;background:#222;"></div>
<div class="abs" style="left:16px;top:150.2px;width:29px;height:1px;background:#c9a0a6;"></div>
<div class="abs" style="left:13px;top:160.5px;width:35.5px;height:27px;background:#f4f4f2;border:1px solid #7a7f88;box-sizing:border-box"></div>
<div class="t" style="left:3.5px;top:164.0px;font-size:7px;"><span style="color:#222"><b>4</b></span></div>
<div class="abs" style="left:16px;top:163.5px;width:18px;height:2px;background:#2a2a2a;"></div>
<div class="abs" style="left:16px;top:167.0px;width:29px;height:1px;background:#c98a92;"></div>
<div class="abs" style="left:19px;top:170.0px;width:22px;height:1.8px;background:#222;"></div>
<div class="abs" style="left:20px;top:173.6px;width:16px;height:1.8px;background:#333;"></div>
<div class="abs" style="left:20px;top:177.2px;width:17px;height:1.8px;background:#333;"></div>
<div class="abs" style="left:16px;top:184.0px;width:29px;height:1px;background:#c9a0a6;"></div>
<div class="abs" style="left:13px;top:194.2px;width:35.5px;height:27px;background:#f4f4f2;border:1px solid #7a7f88;box-sizing:border-box"></div>
<div class="t" style="left:3.5px;top:197.8px;font-size:7px;"><span style="color:#222"><b>5</b></span></div>
<div class="abs" style="left:16px;top:197.2px;width:18px;height:2px;background:#2a2a2a;"></div>
<div class="abs" style="left:16px;top:200.8px;width:29px;height:1px;background:#c98a92;"></div>
<div class="abs" style="left:20px;top:203.8px;width:17px;height:1.8px;background:#555;"></div>
<div class="abs" style="left:20px;top:207.4px;width:18px;height:1.8px;background:#222;"></div>
<div class="abs" style="left:19px;top:211.0px;width:23px;height:1.8px;background:#222;"></div>
<div class="abs" style="left:21px;top:214.5px;width:20px;height:1.8px;background:#555;"></div>
<div class="abs" style="left:16px;top:217.8px;width:29px;height:1px;background:#c9a0a6;"></div>
<div class="abs" style="left:13px;top:228.0px;width:35.5px;height:27px;background:#f4f4f2;border:1px solid #7a7f88;box-sizing:border-box"></div>
<div class="t" style="left:3.5px;top:231.5px;font-size:7px;"><span style="color:#222"><b>6</b></span></div>
<div class="abs" style="left:16px;top:231.0px;width:13px;height:2px;background:#2a2a2a;"></div>
<div class="abs" style="left:16px;top:234.5px;width:29px;height:1px;background:#c98a92;"></div>
<div class="abs" style="left:20px;top:237.5px;width:18px;height:1.8px;background:#333;"></div>
<div class="abs" style="left:21px;top:241.1px;width:18px;height:1.8px;background:#333;"></div>
<div class="abs" style="left:20px;top:244.7px;width:23px;height:1.8px;background:#222;"></div>
<div class="abs" style="left:16px;top:251.5px;width:29px;height:1px;background:#c9a0a6;"></div>
<div class="abs" style="left:13px;top:261.8px;width:35.5px;height:27px;background:#f4f4f2;border:1px solid #7a7f88;box-sizing:border-box"></div>
<div class="t" style="left:3.5px;top:265.2px;font-size:7px;"><span style="color:#222"><b>7</b></span></div>
<div class="abs" style="left:16px;top:264.8px;width:18px;height:2px;background:#2a2a2a;"></div>
<div class="abs" style="left:16px;top:268.2px;width:29px;height:1px;background:#c98a92;"></div>
<div class="abs" style="left:20px;top:271.2px;width:20px;height:1.8px;background:#222;"></div>
<div class="abs" style="left:20px;top:274.9px;width:21px;height:1.8px;background:#555;"></div>
<div class="abs" style="left:19px;top:278.5px;width:18px;height:1.8px;background:#222;"></div>
<div class="abs" style="left:16px;top:285.2px;width:29px;height:1px;background:#c9a0a6;"></div>
<div class="abs" style="left:13px;top:295.5px;width:35.5px;height:27px;background:#f4f4f2;border:1px solid #7a7f88;box-sizing:border-box"></div>
<div class="t" style="left:3.5px;top:299.0px;font-size:7px;"><span style="color:#222"><b>8</b></span></div>
<div class="abs" style="left:16px;top:298.5px;width:18px;height:2px;background:#2a2a2a;"></div>
<div class="abs" style="left:16px;top:302.0px;width:29px;height:1px;background:#c98a92;"></div>
<div class="abs" style="left:19px;top:305.0px;width:14px;height:1.8px;background:#666;"></div>
<div class="abs" style="left:21px;top:308.6px;width:18px;height:1.8px;background:#666;"></div>
<div class="abs" style="left:21px;top:312.2px;width:19px;height:1.8px;background:#555;"></div>
<div class="abs" style="left:16px;top:319.0px;width:29px;height:1px;background:#c9a0a6;"></div>
<div class="abs" style="left:13px;top:329.2px;width:35.5px;height:27px;background:#f4f4f2;border:1px solid #7a7f88;box-sizing:border-box"></div>
<div class="t" style="left:3.5px;top:332.8px;font-size:7px;"><span style="color:#222"><b>9</b></span></div>
<div class="abs" style="left:16px;top:332.2px;width:17px;height:2px;background:#2a2a2a;"></div>
<div class="abs" style="left:16px;top:335.8px;width:29px;height:1px;background:#c98a92;"></div>
<div class="abs" style="left:19px;top:338.8px;width:20px;height:1.8px;background:#555;"></div>
<div class="abs" style="left:21px;top:342.4px;width:24px;height:1.8px;background:#666;"></div>
<div class="abs" style="left:20px;top:346.0px;width:16px;height:1.8px;background:#222;"></div>
<div class="abs" style="left:16px;top:352.8px;width:29px;height:1px;background:#c9a0a6;"></div>
<div class="abs" style="left:13px;top:363.0px;width:35.5px;height:10.5px;background:#f4f4f2;border:1px solid #7a7f88;box-sizing:border-box;border-bottom:none"></div>
<div class="t" style="left:0.5px;top:366.0px;font-size:7px;"><span style="color:#222"><b>10</b></span></div>
<div class="abs" style="left:16px;top:366.0px;width:15px;height:2px;background:#2a2a2a;"></div>
<div class="abs" style="left:16px;top:369.5px;width:29px;height:1px;background:#c98a92;"></div>
<div class="abs" style="left:19px;top:371.5px;width:22px;height:1.5px;background:#333;"></div>
<div class="abs" style="left:0px;top:374px;width:67px;height:8px;background:#e6ecf5;"></div>
<div class="abs" style="left:0px;top:374px;width:11px;height:8.5px;background:#d9c7a6;border:1px solid #8a7a5a;box-sizing:border-box"></div>
<div class="abs" style="left:2.5px;top:376px;width:2.5px;height:2px;background:#555;"></div>
<div class="abs" style="left:6px;top:376px;width:2.5px;height:2px;background:#555;"></div>
<div class="abs" style="left:2.5px;top:379px;width:2.5px;height:2px;background:#555;"></div>
<div class="abs" style="left:6px;top:379px;width:2.5px;height:2px;background:#555;"></div>
<div class="abs" style="left:13px;top:375.5px;width:8px;height:6px;background:transparent;border:1px solid #6a7486;box-sizing:border-box"></div>
<div class="abs" style="left:16.5px;top:375.5px;width:1px;height:6px;background:#6a7486;"></div>
<div class="abs" style="left:13px;top:378px;width:8px;height:1px;background:#6a7486;"></div>
<svg class="abs" style="left:24px;top:375px" width="9" height="7"><path d="M0.500 0.500h8v2h-8zM2.500 2.500L4.500 5L6.500 2.500M2 6.500h5" fill="#4a5264" stroke="#3a4254" stroke-width="0.600"/></svg>
<div class="t" style="left:33px;top:375px;font-size:7px;"><span style="color:#b7c3d6">‹</span></div>
<div class="t" style="left:56px;top:375px;font-size:7px;"><span style="color:#b7c3d6">›</span></div>

<div class="abs" style="left:212px;top:60px;width:406px;height:303px;background:#0b0b0b"></div>
<div class="abs" id="slide" style="left:210px;top:58px;width:406px;height:303px;background:repeating-linear-gradient(#f3f3f3 0,#f3f3f3 1px,#ededed 1px,#ededed 2px);border:1px solid #9a9a9a;box-sizing:border-box"></div>
<div class="abs" style="left:237px;top:127px;width:207px;height:5px;background:#cc1417"></div>
<div class="abs" style="left:444px;top:127px;width:145px;height:1px;background:#b98a80"></div>
<div class="abs" style="left:237px;top:331px;width:352px;height:1px;background:#b98a80"></div>
<div class="t" id="st1" style="-webkit-text-stroke:0.25px #c0262b;left:262px;top:175.300px;letter-spacing:0.400px;font-size:19px;color:#c0262b !important;line-height:24px"><span style="color:#c0262b">Yankton Area<br>Housing Study Update</span></div>
<div class="t" id="st2" style="-webkit-text-stroke:0.2px #1c1c1c;left:310px;top:257px;width:200px;text-align:center;font-size:15.500px;line-height:20.400px;letter-spacing:0.700px"><span style="color:#1c1c1c">Presentation<br>April 2022</span></div>

<div class="abs" style="left:2px;top:384px;width:1px;height:11px;background:transparent;border-left:1px dotted #7d93b5"></div>
<div class="t" style="left:5.5px;top:385.5px;font-size:7.5px;font-family:'Liberation Sans',sans-serif;letter-spacing:-0.2px"><span style="color:#2f4570">D<u>r</u>aw</span></div>
<div class="t" style="left:24px;top:387.5px;font-size:5px;"><span style="color:#2f4060">▾</span></div>
<div class="abs" style="left:29.5px;top:383px;width:13px;height:13px;background:#f0bd7e;border:1px solid #c9793a;box-sizing:border-box"></div>
<svg class="abs" style="left:33px;top:385px" width="7" height="9" viewBox="0 0 7 9"><path d="M1 0.500V7L2.800 5.300L4 8L5 7.500L3.800 5L6 5z" fill="#fbfbfb" stroke="#8a6a4a" stroke-width="0.500"/></svg>
<div class="t" style="left:47.5px;top:385.5px;font-size:6.900px;font-family:'Liberation Sans',sans-serif;letter-spacing:-0.2px"><span style="color:#2f4570">A<u>u</u>toShapes</span></div>
<div class="t" style="left:85.5px;top:387.5px;font-size:5px;"><span style="color:#2f4060">▾</span></div>
<svg class="abs" style="left:93px;top:385px" width="9" height="9" viewBox="0 0 9 9"><path d="M1 1L8 8" stroke="#4a5672" stroke-width="1"/></svg>
<svg class="abs" style="left:104px;top:385px" width="9" height="9" viewBox="0 0 9 9"><path d="M1 1L7 7" stroke="#27304a" stroke-width="1"/><path d="M8.500 8.500L4.500 7L7 4.500z" fill="#27304a"/></svg>
<div class="abs" style="left:117.5px;top:386px;width:10px;height:7px;background:transparent;border:1px solid #333c52;box-sizing:border-box"></div>
<div class="abs" style="left:130.5px;top:386px;width:10px;height:7px;background:transparent;border:1px solid #333c52;box-sizing:border-box;border-radius:50%"></div>
<div class="abs" style="left:143.5px;top:386px;width:8px;height:7px;background:#e9eef6;border:1px solid #7f8fb0;box-sizing:border-box"></div>
<div class="abs" style="left:145.5px;top:388px;width:3px;height:2px;background:#55607a;"></div>
<svg class="abs" style="left:154px;top:384px" width="11" height="11" viewBox="0 0 11 11"><path d="M1 9L7 1L10 10L7.500 10L7 7L4 8z" fill="#4a78c8" stroke="#2f56a0" stroke-width="0.500"/></svg>
<svg class="abs" style="left:168px;top:385px" width="10" height="10" viewBox="0 0 10 10"><circle cx="5" cy="5" r="3.300" fill="none" stroke="#3a4a6a" stroke-width="1.600" stroke-dasharray="2.500 1.500"/></svg>
<div class="abs" style="left:181.5px;top:385.5px;width:8px;height:9px;background:#d8c9a0;border:1px solid #7a7a7a;box-sizing:border-box"></div>
<div class="abs" style="left:184px;top:387.5px;width:3px;height:5px;background:#6a5a3a;"></div>
<div class="abs" style="left:193.5px;top:385.5px;width:8px;height:9px;background:#dfe5ee;border:1px solid #8d9bb6;box-sizing:border-box"></div>
<div class="abs" style="left:195.5px;top:389.5px;width:4px;height:3px;background:#a9b7ce;"></div>
<div class="abs" style="left:206px;top:384.5px;width:1px;height:10px;background:#8fa6c8;"></div>
<svg class="abs" style="left:210px;top:384.5px" width="11" height="11" viewBox="0 0 11 11"><path d="M2 6L5.500 1.500L9 5L5.500 9z" fill="#e6ebf3" stroke="#55627e" stroke-width="0.700"/><path d="M9 5.500Q10.500 7.500 9.500 9" stroke="#55627e" fill="none"/><rect x="0.500" y="9.500" width="10" height="1.500" fill="#c8d4e6"/></svg>
<div class="t" style="left:223px;top:387.5px;font-size:5px;"><span style="color:#2f4060">▾</span></div>
<svg class="abs" style="left:231px;top:384.5px" width="11" height="11" viewBox="0 0 11 11"><path d="M2 7L8 1L9.500 2.500L4 8z" fill="#d8b84a" stroke="#55627e" stroke-width="0.500"/><rect x="0.500" y="8.800" width="10" height="2.200" fill="#1a2440"/></svg>
<div class="t" style="left:243px;top:387.5px;font-size:5px;"><span style="color:#2f4060">▾</span></div>
<div class="t" style="left:251px;top:384px;font-size:8px;font-family:'DejaVu Serif',serif"><span style="color:#2a3a5c"><b>A</b></span></div>
<div class="abs" style="left:250.5px;top:393px;width:9px;height:2.2px;background:#1a2440;"></div>
<div class="t" style="left:262.5px;top:387.5px;font-size:5px;"><span style="color:#2f4060">▾</span></div>
<div class="abs" style="left:268px;top:386.5px;width:9px;height:1.5px;background:#222b40;"></div>
<div class="abs" style="left:268px;top:389px;width:9px;height:2px;background:#222b40;"></div>
<div class="abs" style="left:268px;top:392px;width:9px;height:2.5px;background:#222b40;"></div>
<div class="abs" style="left:282px;top:387px;width:9px;height:1px;background:#7f8aa4;"></div>
<div class="abs" style="left:282px;top:390px;width:9px;height:1px;background:#7f8aa4;opacity:.8"></div>
<div class="abs" style="left:282px;top:393px;width:9px;height:1px;background:#7f8aa4;opacity:.7"></div>
<div class="abs" style="left:295.5px;top:386.5px;width:9px;height:1.5px;background:#222b40;"></div>
<div class="abs" style="left:295.5px;top:389.5px;width:9px;height:1.5px;background:#222b40;"></div>
<div class="abs" style="left:295.5px;top:392.5px;width:9px;height:1.5px;background:#222b40;"></div>
<div class="abs" style="left:296px;top:385.5px;width:2px;height:3px;background:#222b40;"></div>
<div class="abs" style="left:302px;top:391.5px;width:2px;height:3px;background:#222b40;"></div>
<div class="abs" style="left:308.5px;top:385.5px;width:8px;height:8px;background:#5aa05a;border-radius:2px;box-shadow:1px 1px 0 #2f6a3a"></div>
<div class="abs" style="left:321.5px;top:385.5px;width:8px;height:8px;background:#6ab06a;border-radius:2px;box-shadow:1.500px 1px 0 #2f6a3a"></div>
<div class="abs" style="left:333.5px;top:382px;width:5px;height:15px;background:#3f62a8;border-radius:0 3px 3px 0"></div>
<div class="t" style="left:50px;top:400px;font-size:7.2px;font-family:'Liberation Sans',sans-serif;letter-spacing:-0.15px"><span style="color:#555">Slide 1 of 27</span></div>
<div class="t" style="left:201px;top:400px;font-size:7.2px;font-family:'Liberation Sans',sans-serif;letter-spacing:-0.15px"><span style="color:#555">Profile</span></div>
<div class="abs" style="left:139px;top:398px;width:1px;height:11px;background:#cfcfcb;"></div>
<div class="abs" style="left:142px;top:398px;width:1px;height:11px;background:#f6f6f4;"></div>
<div class="abs" style="left:282px;top:398px;width:1px;height:11px;background:#d6d6d2;"></div>
<div class="abs" style="left:322px;top:398px;width:1px;height:11px;background:#d6d6d2;"></div>
<svg class="abs" style="left:759.5px;top:46px" width="6" height="4" viewBox="0 0 6 4"><path d="M0.500 3.500L3 1L5.500 3.500" fill="none" stroke="#555" stroke-width="1"/></svg>
<div class="abs" style="left:759px;top:52px;width:7px;height:12px;background:#c9cdd4;"></div>
<svg class="abs" style="left:759.5px;top:341px" width="6" height="4" viewBox="0 0 6 4"><path d="M0.500 0.500L3 3L5.500 0.500" fill="none" stroke="#444" stroke-width="1"/></svg>
<div class="t" style="left:759.5px;top:349px;font-size:6px;"><span style="color:#333">▴</span></div>
<div class="t" style="left:759.5px;top:356px;font-size:6px;"><span style="color:#333">▾</span></div>

<div class="abs" style="left:238px;top:410px;width:32.4px;height:22px;background:rgba(120,160,185,0.45);"></div>
<div class="abs" style="left:272.3px;top:410px;width:33.3px;height:22px;background:rgba(120,160,185,0.45);"></div>
<div class="abs" style="left:307px;top:410px;width:33.7px;height:22px;background:rgba(120,160,185,0.45);"></div>
<div class="abs" style="left:342px;top:410px;width:33px;height:22px;background:rgba(120,160,185,0.45);"></div>
<svg class="abs" style="left:6px;top:413.5px;" width="16" height="15" viewBox="0 0 16 15"><path d="M0 2.300L6.800 1.200V7H0zM7.800 1.050L16 0V7H7.800zM0 8H6.800V13.800L0 12.700zM7.800 8H16V15L7.800 13.950z" fill="#f4f7f9"/></svg>
<svg class="abs" style="left:35.5px;top:413.5px;" width="19" height="16" viewBox="0 0 19 16"><path d="M1 2.500h6l1.500 1.500h9.500v11h-17z" fill="#e8cf6a"/><rect x="2" y="5" width="15" height="9.500" fill="#f3e08a"/><rect x="3" y="10" width="13" height="3" fill="#8cc3d8"/><rect x="4" y="3.500" width="11" height="2" fill="#f7f3e0"/></svg>
<div class="abs" style="left:70.8px;top:411.8px;width:18px;height:18px;background:#f4f6f8;border-radius:50%"></div>
<div class="t" style="left:74.3px;top:414.5px;font-size:11px;font-family:'Liberation Sans',sans-serif;letter-spacing:-0.8px"><span style="color:#33586e"><i><b>hp</b></i></span></div>
<div class="abs" style="left:107.5px;top:414px;width:15px;height:14px;background:#0f1518;"></div>
<svg class="abs" style="left:110px;top:415px;" width="11" height="13" viewBox="0 0 11 13"><path d="M3.500 12V8L2 6.500L3 5.500L4.500 6.500V1.500Q5.200 0.500 6 1.500V5.500L9.500 6.500V10L8.500 12z" fill="#f0f0f0"/></svg>
<svg class="abs" style="left:141px;top:412px;" width="18" height="18" viewBox="0 0 18 18"><circle cx="9" cy="9" r="8.600" fill="#e8453a"/><path d="M9 9L1.600 4.700A8.600 8.600 0 0 0 7.500 17.500L12 11z" fill="#3aa757"/><path d="M9 9L12.800 11.500L7.800 17.500A8.600 8.600 0 0 0 16.800 5.500H9z" fill="#f7c52c"/><circle cx="9" cy="9" r="4" fill="#f3f3f3"/><circle cx="9" cy="9" r="3.100" fill="#3f7be0"/></svg>
<div class="abs" style="left:176.5px;top:414px;width:15px;height:14px;background:#cfe6cf;border:1px solid #5a9a62;box-sizing:border-box"></div>
<div class="t" style="left:179.5px;top:415px;font-size:11px;font-family:'Liberation Sans',sans-serif;"><span style="color:#2d8a3e"><b>X</b></span></div>
<div class="abs" style="left:211px;top:414px;width:17px;height:14px;background:#2f6a3a;"></div>
<svg class="abs" style="left:211px;top:412.5px;" width="18" height="17" viewBox="0 0 18 17"><path d="M3 8L9 1.500L16 8L11 14.500z" fill="#e9ecdf"/><path d="M5 8L9 4L10.500 5.500L6.500 9.500zM8 10.500L12 6.500L13.300 8L9.500 12z" fill="#3a4a3a"/><path d="M9 11L16 9L14 14.500L10 15z" fill="#d8cf4a"/></svg>
<svg class="abs" style="left:244px;top:410.5px;" width="21" height="21" viewBox="0 0 21 21"><circle cx="10.500" cy="11" r="9" fill="#f0653a"/><path d="M10.500 2Q14 0.500 15.500 4Q19.500 7 19.300 12A9 9 0 0 1 13 19.500Q17 15 14.500 9Q13 5 10.500 2z" fill="#f8b13a"/><circle cx="9.500" cy="10.500" r="4.200" fill="#7a3fb0"/><path d="M5 8Q8 6.500 10 9Q12 8.500 12.500 10Q10.500 11.500 8 11Q6 11 5 8z" fill="#f0653a"/></svg>
<div class="abs" style="left:280.5px;top:412.5px;width:17px;height:17px;background:#e8eff5;border-radius:50%"></div>
<div class="abs" style="left:282.5px;top:414.5px;width:13px;height:13px;background:#2a66a8;border-radius:50%"></div>
<svg class="abs" style="left:286.5px;top:414px;" width="5" height="14" viewBox="0 0 5 14"><path d="M2.500 0L4 4V13.500H1V4z" fill="#16427a"/></svg>
<div class="abs" style="left:315.5px;top:413px;width:16.5px;height:15.5px;background:#e9b79c;border:1.500px solid #b8694a;box-sizing:border-box"></div>
<div class="abs" style="left:319px;top:417px;width:9.5px;height:8px;background:#f3d0bc;border:1px solid #c98a6e;box-sizing:border-box"></div>
<div class="abs" style="left:322px;top:419.5px;width:3px;height:3px;background:#c0654a;border-radius:50%"></div>
<div class="abs" style="left:349.8px;top:412px;width:18px;height:18px;background:#f8f8f6;border-radius:3.500px"></div>
<div class="t" style="left:353.3px;top:414px;font-size:13px;font-family:'Liberation Sans',sans-serif;"><span style="color:#121212"><b>G</b></span></div>
<div class="abs" style="left:353.5px;top:425px;width:10px;height:2.5px;background:#cfdc4a;"></div>
<div class="abs" style="left:652.5px;top:414px;width:14px;height:14px;background:#e6f0f4;border-radius:50%"></div>
<div class="abs" style="left:654px;top:415.5px;width:11px;height:11px;background:#3a9ac8;border-radius:50%"></div>
<div class="t" style="left:656.7px;top:416.3px;font-size:9.5px;font-family:'Liberation Sans',sans-serif;"><span style="color:#f4f8fa"><b>?</b></span></div>
<div class="abs" style="left:662px;top:422.5px;width:5px;height:5px;background:#e8b64a;border-radius:50%"></div>
<div class="t" style="left:671.5px;top:418px;font-size:4.5px;"><span style="color:#dfe8ee">▲</span></div>
<div class="abs" style="left:684.5px;top:417.5px;width:3px;height:6px;background:#dfe8ee;"></div>
<div class="abs" style="left:688px;top:416.5px;width:4px;height:8px;background:#dfe8ee;"></div>
<div class="abs" style="left:698px;top:416.5px;width:1px;height:8px;background:#e8eef2;"></div>
<div class="abs" style="left:699px;top:417px;width:5px;height:4px;background:#e8eef2;"></div>
<div class="t" style="left:704.5px;top:417.5px;font-size:4px;"><span style="color:#dfe8ee">▾</span></div>
<div class="abs" style="left:711px;top:417px;width:6px;height:5px;background:transparent;border:1px solid #dfe8ee;box-sizing:border-box"></div>
<div class="abs" style="left:709px;top:420.5px;width:3px;height:4px;background:#dfe8ee;"></div>
<div class="t" style="left:729.5px;top:412.5px;font-size:6.9px;font-family:'Liberation Sans',sans-serif;letter-spacing:-0.2px"><span style="color:#e4ecf0">7:06 PM</span></div>
<div class="t" style="left:727.5px;top:422.5px;font-size:6.9px;font-family:'Liberation Sans',sans-serif;letter-spacing:-0.2px"><span style="color:#e4ecf0">4/25/2022</span></div>

</div>
<div id="taskbar">
<div class="abs" style="left:3px;top:844px;width:1277px;height:28px;background:#2d3d44;border-top:1px solid #8a8f92;box-sizing:border-box"></div>
<div class="abs" style="left:262px;top:845px;width:1018px;height:27px;background:linear-gradient(90deg,#2d3c43 0,#2b3a42 45%,#29343d 58%,#262e39 72%,#242a35 100%);"></div>
<svg class="abs" style="left:10px;top:852.5px;" width="13" height="13" viewBox="0 0 13 13"><path d="M0 1.800L5.600 1V6H0zM6.400 0.900L13 0V6H6.400zM0 6.800H5.600V11.800L0 11zM6.400 6.800H13V13L6.400 12z" fill="#f4f6f8"/></svg>
<div class="abs" style="left:32px;top:845px;width:230px;height:27px;background:#e5e5e5;"></div>
<svg class="abs" style="left:39px;top:851px;" width="13" height="13" viewBox="0 0 13 13"><circle cx="8" cy="5" r="3.800" fill="none" stroke="#333" stroke-width="1.200"/><path d="M5.300 7.700L1 12" stroke="#333" stroke-width="1.300"/></svg>
<div class="t" style="left:59px;top:853px;font-size:10px;color:#4a4a4a;letter-spacing:-0.15px">Type here to search</div>
<div class="abs" style="left:272.5px;top:853.5px;width:10px;height:10px;background:transparent;border:1.600px solid #f0f0f0;border-radius:50%;box-sizing:border-box"></div>
<svg class="abs" style="left:304px;top:853px;" width="13" height="11" viewBox="0 0 13 11"><rect x="0.500" y="2.500" width="8" height="6.500" fill="none" stroke="#e8e8e8" stroke-width="1.100"/><path d="M0.500 0.600h9M11 2.500v2M11 6v3" stroke="#e8e8e8" stroke-width="1.100"/></svg>
<div class="abs" style="left:330px;top:852px;width:1px;height:13px;background:#4a565c;"></div>
<svg class="abs" style="left:349px;top:850.5px;" width="17" height="17" viewBox="0 0 17 17"><circle cx="8.500" cy="8.500" r="8" fill="#1f8fd6"/><path d="M2 6Q6 0 12 1.500Q16.500 3.500 16.500 8.500Q14 4.500 9.500 5Q5 5.500 2 6z" fill="#4fd08a"/><path d="M6 8Q10 6 12 9Q12 11 9 11.500Q10 14 14 13Q11 17 6.500 15.500Q3.500 12 6 8z" fill="#0f5fa8"/></svg>
<svg class="abs" style="left:382px;top:850.5px;" width="17" height="17" viewBox="0 0 17 17"><circle cx="8.500" cy="8.500" r="8" fill="#e8453a"/><path d="M8.500 8.500L1.600 4.500A8 8 0 0 0 7 16.400L11.500 10.500z" fill="#3aa757"/><path d="M8.500 8.500L12 11L7.300 16.400A8 8 0 0 0 15.800 5.200H8.500z" fill="#f7c52c"/><circle cx="8.500" cy="8.500" r="3.700" fill="#f3f3f3"/><circle cx="8.500" cy="8.500" r="2.900" fill="#3f7be0"/></svg>
<svg class="abs" style="left:415px;top:851.5px;" width="16" height="14" viewBox="0 0 16 14"><path d="M0.500 1h5.500l1.500 1.500h8v11h-15z" fill="#e9c24a"/><rect x="0.500" y="4" width="15" height="9.500" fill="#f5d66a"/><rect x="4.500" y="8" width="7" height="5.500" fill="#4f8fc0"/><rect x="6" y="9.500" width="4" height="4" fill="#e9c24a"/></svg>
<svg class="abs" style="left:447.5px;top:849.5px;" width="16" height="18" viewBox="0 0 16 18"><path d="M5 5Q5 1 8 1Q11 1 11 5" fill="none" stroke="#3f9ad8" stroke-width="1.300"/><rect x="0.500" y="4.500" width="15" height="13" rx="1.500" fill="#f2f2f2"/><rect x="4.500" y="7.500" width="3" height="3" fill="#e8453a"/><rect x="8.500" y="7.500" width="3" height="3" fill="#6ab04a"/><rect x="4.500" y="11.500" width="3" height="3" fill="#3f8fe0"/><rect x="8.500" y="11.500" width="3" height="3" fill="#f2b62c"/></svg>
<svg class="abs" style="left:480px;top:851px;" width="17" height="15" viewBox="0 0 17 15"><path d="M0.500 5L8.500 0.500L16.500 5V14.500H0.500z" fill="#2f8fd8"/><path d="M0.500 5.500L8.500 10.500L16.500 5.500V14.500H0.500z" fill="#55b6f0"/><path d="M0.500 14.500L8.500 8.500L16.500 14.500z" fill="#2a7fc8"/></svg>
<div class="t" style="left:513px;top:853.5px;font-size:8.5px;color:#f0f0f4;letter-spacing:-0.5px"><b>NDI</b></div>
<svg class="abs" style="left:518px;top:861px;" width="10" height="5" viewBox="0 0 10 5"><path d="M1 4.500L3 0.500M4.500 4.500L6.500 0.500M8 4.500L9.500 1.500" stroke="#4a4a8a" stroke-width="1.200"/></svg>
<svg class="abs" style="left:546px;top:850.5px;" width="17" height="16" viewBox="0 0 17 16"><rect x="6" y="2" width="10.500" height="12" fill="#f2d8d0"/><path d="M9 5h6M9 8h6M9 11h6" stroke="#d8543a" stroke-width="1.300"/><path d="M0.500 2L9.500 0.500V15.500L0.500 14z" fill="#d04a2c"/></svg>
<div class="t" style="left:549.5px;top:853.5px;font-size:9px;color:#fbeee8;"><b>P</b></div>
<div class="abs" style="left:570.5px;top:845px;width:32px;height:27px;background:#46555e;"></div>
<div class="abs" style="left:578.5px;top:850.5px;width:16.5px;height:16.5px;background:#f0a24a;border-radius:50%"></div>
<svg class="abs" style="left:580.5px;top:852.5px;" width="12.5" height="12.5" viewBox="0 0 12.5 12.5"><g fill="#fbe8cc"><circle cx="6.250" cy="2.400" r="1.300"/><circle cx="6.250" cy="10.100" r="1.300"/><circle cx="2.900" cy="4.300" r="1.300"/><circle cx="9.600" cy="4.300" r="1.300"/><circle cx="2.900" cy="8.200" r="1.300"/><circle cx="9.600" cy="8.200" r="1.300"/></g><path d="M6.250 2.400V10.100M2.900 4.300L9.600 8.200M9.600 4.300L2.900 8.200" stroke="#fbe8cc" stroke-width="0.800"/></svg>
<div class="abs" style="left:377.5px;top:870px;width:26px;height:2px;background:#8ab4e0;"></div>
<div class="abs" style="left:540px;top:870px;width:27px;height:2px;background:#8ab4e0;"></div>
<div class="abs" style="left:570.5px;top:870px;width:32px;height:2px;background:#9cc2e8;"></div>
<div class="abs" style="left:940.5px;top:850.5px;width:17px;height:17px;background:#e6f0f4;border-radius:50%"></div>
<div class="abs" style="left:942.5px;top:852.5px;width:13px;height:13px;background:#2f96cc;border-radius:50%"></div>
<div class="t" style="left:946px;top:853px;font-size:11px;color:#f4f8fa;"><b>?</b></div>
<div class="abs" style="left:951.5px;top:860.5px;width:6px;height:6px;background:#e8b64a;border-radius:50%"></div>
<div class="abs" style="left:1015.5px;top:852px;width:13.5px;height:13.5px;background:radial-gradient(circle at 40% 40%,#fbd24a,#f0a62c);border-radius:50%"></div>
<div class="t" style="left:1036px;top:854px;font-size:9.5px;color:#f0f0f0;letter-spacing:-0.2px">51°F</div>
<div class="t" style="left:1060px;top:854px;font-size:9.5px;color:#f0f0f0;letter-spacing:-0.2px">Sunny</div>
<svg class="abs" style="left:1096px;top:855px;" width="9" height="6" viewBox="0 0 9 6"><path d="M0.800 5L4.500 1.300L8.200 5" fill="none" stroke="#f0f0f0" stroke-width="1.200"/></svg>
<div class="abs" style="left:1111.5px;top:853.5px;width:10.5px;height:10.5px;background:#b89a4a;"></div>
<div class="abs" style="left:1113.5px;top:855.5px;width:6.5px;height:3px;background:#e8d89a;"></div>
<div class="abs" style="left:1113.5px;top:860px;width:4px;height:2px;background:#6a5520;"></div>
<svg class="abs" style="left:1128px;top:852.5px;" width="10" height="13" viewBox="0 0 10 13"><rect x="1" y="2.500" width="8" height="8" rx="2" fill="none" stroke="#f0f0f0" stroke-width="1.100"/><circle cx="5" cy="6.500" r="1.500" fill="#f0f0f0"/><path d="M2.500 0.600h5M2.500 12.400h5" stroke="#f0f0f0" stroke-width="1"/></svg>
<svg class="abs" style="left:1143.5px;top:852.5px;" width="9" height="13" viewBox="0 0 9 13"><rect x="2.300" y="0.500" width="4.400" height="7.500" rx="2.200" fill="#e4e4e4"/><path d="M0.800 6Q0.800 10 4.500 10Q8.200 10 8.200 6M4.500 10V12.300M2.500 12.500h4" fill="none" stroke="#e4e4e4" stroke-width="1"/></svg>
<svg class="abs" style="left:1158px;top:853px;" width="13" height="12" viewBox="0 0 13 12"><rect x="1" y="1" width="11" height="8" fill="none" stroke="#f0f0f0" stroke-width="1.100"/><path d="M4 11.400h5" stroke="#f0f0f0"/><rect x="4" y="3" width="5" height="3.500" fill="#f0f0f0" opacity="0.700"/><circle cx="10.500" cy="9.500" r="1.800" fill="#3f8fe0"/></svg>
<svg class="abs" style="left:1174px;top:853px;" width="13" height="12" viewBox="0 0 13 12"><rect x="4" y="1" width="8.500" height="6.500" fill="none" stroke="#f0f0f0" stroke-width="1.100"/><path d="M8 7.500v2.500M5 10.500h6M0.800 2v9M0.800 4h2.400" stroke="#f0f0f0" stroke-width="1"/></svg>
<svg class="abs" style="left:1190px;top:853px;" width="14" height="12" viewBox="0 0 14 12"><path d="M0.500 4h2.500l3-2.800v9.600l-3-2.800h-2.500z" fill="none" stroke="#f0f0f0" stroke-width="1"/><path d="M7.800 4q1.300 2 0 4M9.800 2.500q2.300 3.500 0 7M11.800 1q3.200 5 0 10" fill="none" stroke="#f0f0f0" stroke-width="0.900"/></svg>
<div class="t" style="left:1212px;top:848.5px;font-size:8.3px;color:#f2f2f2;letter-spacing:-0.2px">7:06 PM</div>
<div class="t" style="left:1208.5px;top:860px;font-size:8.3px;color:#f2f2f2;letter-spacing:-0.2px">4/25/2022</div>
<svg class="abs" style="left:1255px;top:853px;" width="13" height="12" viewBox="0 0 13 12"><path d="M0.700 0.700h11.600v8h-2.300v2.300l-2.800-2.300h-6.500z" fill="none" stroke="#f0f0f0" stroke-width="1.100"/></svg>
</div>

<svg class="abs" style="left:1057px;top:303px;" width="9" height="13" viewBox="0 0 9 13"><path d="M1 0.500V10.500L3.400 8.300L5 12L6.600 11.300L5 7.700H8.200z" fill="#fafafa" stroke="#222" stroke-width="0.700"/></svg>
<svg class="abs" style="left:300px;top:472.5px;" width="8" height="11" viewBox="0 0 8 11"><path d="M1 0.500V8.500L2.800 6.800L4.200 10L5.500 9.400L4.200 6.300H6.800z" fill="#fafafa" stroke="#333" stroke-width="0.600"/></svg>

</div>
</body>
</html>
